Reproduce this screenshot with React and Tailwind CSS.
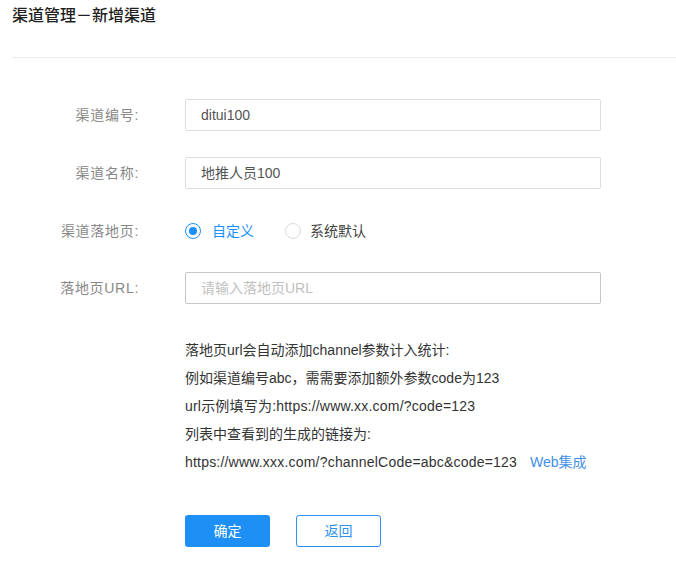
import React from "react";

const font = { fontFamily: '"Liberation Sans","Noto Sans CJK SC",sans-serif' };

function Row({ label, children, className = "" }) {
  return (
    <div className={`flex items-center h-[32px] ${className}`}>
      <div className="w-[139px] text-right text-[14px] tracking-[0.7px] text-[#888]">{label}</div>
      <div className="ml-[46px] flex items-center">{children}</div>
    </div>
  );
}

function Input({ value, placeholder, dark }) {
  return (
    <div
      className={`w-[416px] h-[32px] rounded-[2px] border ${
        dark ? "border-[#c6c6c6]" : "border-[#dedede]"
      } bg-white pl-[15px] flex items-center text-[14px] ${
        value ? "text-[#555]" : "text-[#c0c0c0]"
      }`}
    >
      {value || placeholder}
    </div>
  );
}

export default function App() {
  return (
    <div className="w-[676px] h-[575px] bg-white" style={font}>
      <div className="ml-[12px] h-[58px] border-b border-[#ebebeb]">
        <div className="pt-[4px] text-[16px] leading-[24px] font-medium text-[#1f1f1f]">
          渠道管理－新增渠道
        </div>
      </div>
      <div className="pt-[41px]">
        <Row label="渠道编号:">
          <Input value="ditui100" />
        </Row>
        <Row label="渠道名称:" className="mt-[26px]">
          <Input value="地推人员100" />
        </Row>
        <Row label="渠道落地页:" className="mt-[26px]">
          <div className="flex items-center">
            <span className="w-[16px] h-[16px] rounded-full border border-[#1890ff] flex items-center justify-center">
              <span className="w-[8px] h-[8px] rounded-full bg-[#1890ff]" />
            </span>
            <span className="ml-[11px] text-[14px] text-[#1890ff]">自定义</span>
            <span className="ml-[31px] w-[16px] h-[16px] rounded-full border border-[#d9d9d9]" />
            <span className="ml-[9px] text-[14px] text-[#444]">系统默认</span>
          </div>
        </Row>
        <Row label="落地页URL:" className="mt-[25px]">
          <Input placeholder="请输入落地页URL" dark />
        </Row>
        <div className="ml-[185px] mt-[32px] text-[14px] leading-[28px] text-[#333]">
          <div>落地页url会自动添加channel参数计入统计:</div>
          <div>例如渠道编号abc，需需要添加额外参数code为123</div>
          <div className="tracking-[0.2px]">url示例填写为:https://www.xx.com/?code=123</div>
          <div>列表中查看到的生成的链接为:</div>
          <div>
            <span className="tracking-[0.2px]">https://www.xxx.com/?channelCode=abc&amp;code=123</span>
            <span className="ml-[13px] text-[#3f8fe6]">Web集成</span>
          </div>
        </div>
        <div className="ml-[185px] mt-[39px] flex">
          <button className="w-[85px] h-[32px] rounded-[3px] bg-[#1e8ff5] text-white text-[14px]">
            确定
          </button>
          <button className="ml-[26px] w-[85px] h-[32px] rounded-[3px] border border-[#2d8ff0] bg-white text-[#2d8ff0] text-[14px]">
            返回
          </button>
        </div>
      </div>
    </div>
  );
}
